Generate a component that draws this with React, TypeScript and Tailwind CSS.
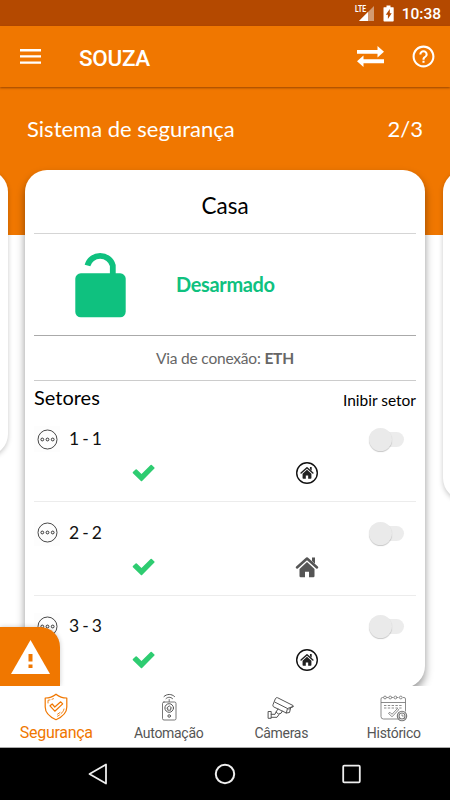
import { useState } from 'react'
import clsx from 'clsx'

interface Sector {
    id: number
    name: string
    circled: boolean
}

const sectors: Sector[] = [
    { id: 1, name: '1 - 1', circled: true },
    { id: 2, name: '2 - 2', circled: false },
    { id: 3, name: '3 - 3', circled: true },
]

function StatusBar() {
    return (
        <div className="flex h-[26px] shrink-0 items-center justify-end bg-[#b44900] pr-[9px] text-white">
            <svg className="h-[26px] w-[24px]" viewBox="0 0 24 26">
                <path d="M23 6v15H8z" fill="#d29a72" />
                <path d="M17 12v9H8z" fill="#fff" />
                <rect x="3" y="4" width="13" height="8.500" fill="#b44900" />
                <text x="4" y="12" fontSize="9.5" fontWeight="700" fontFamily="Roboto, sans-serif" fill="#fff" textLength="11" lengthAdjust="spacingAndGlyphs">LTE</text>
            </svg>
            <svg className="ml-[8px] h-[17px] w-[11px]" viewBox="0 0 11 17">
                <path d="M3.5 0.5h4v1.7h2.7q.5 0 .5.5v13q0 .8-.8.8H1.3q-.8 0-.8-.8v-13q0-.5.5-.5h2.5z" fill="#fff" />
                <path d="M6.8 4 2.8 9.7h2.1V14l3.8-5.7H6.8z" fill="#b44900" />
            </svg>
            <span className="ml-[7px] w-[40px] pt-[3px] text-right text-[15.5px] font-medium leading-none">10:38</span>
        </div>
    )
}

function Header() {
    return (
        <header className="relative z-10 flex h-[61px] shrink-0 items-center bg-[#f07700] pr-[14px] pl-5 text-white shadow-[0_1px_2px_rgba(80,30,0,0.55)]">
            <button title="Menu" className="h-[15px] w-[21px]">
                <svg className="h-[15px] w-[21px]" viewBox="0 0 21 15" fill="#fff">
                    <path d="M0 0h21v2.4H0zM0 6.2h21v2.4H0zM0 12.4h21v2.4H0z" />
                </svg>
            </button>
            <h1 className="ml-[38px] flex-1 pt-[3px] text-[22.5px] font-medium leading-none tracking-[-0.3px]">SOUZA</h1>
            <svg className="h-[21px] w-[27px]" viewBox="0 0 27 21" fill="#fff">
                <path d="M0 4h20.500V0l6.500 5.800-6.500 5.600V7.800H0zM27 17.200H6.500V21L0 15.200 6.500 9.600v3.700H27z" />
            </svg>
            <svg className="ml-[27px] h-[25px] w-[25px]" viewBox="0 0 24 24" fill="#fff">
                <path d="M11 18h2v-2h-2v2zm1-16.500C6.200 1.500 1.500 6.200 1.500 12S6.200 22.500 12 22.500 22.500 17.800 22.500 12 17.800 1.500 12 1.500zm0 19c-4.700 0-8.500-3.800-8.500-8.500S7.300 3.500 12 3.500s8.500 3.800 8.500 8.500-3.800 8.500-8.500 8.500zM12 6c-2.200 0-4 1.800-4 4h2c0-1.100.9-2 2-2s2 .9 2 2c0 2-3 1.750-3 5h2c0-2.250 3-2.500 3-5 0-2.200-1.800-4-4-4z" />
            </svg>
        </header>
    )
}

function OpenLock() {
    return (
        <svg className="h-[67px] w-[51px]" viewBox="0 0 51 67">
            <path d="M12.500 14.500a13 12.500 0 0 1 25.300 0v9" fill="none" stroke="#0fc17f" strokeWidth="5.800" />
            <rect x="0.300" y="22.300" width="50.400" height="44" rx="5.500" fill="#0fc17f" />
        </svg>
    )
}

function HousePaths() {
    return (
        <>
            <path d="M1 11.500 11 2.500l10 9" fill="none" stroke="currentColor" strokeWidth="2.500" strokeLinecap="round" strokeLinejoin="round" />
            <path d="M16 1.500h3v6.200l-3-2.700z" fill="currentColor" />
            <path d="M3.500 13 11 6l7.500 7v7q0 1.200-1.200 1.200h-4.300v-5.500H9v5.500H4.700q-1.200 0-1.200-1.200z" fill="currentColor" />
        </>
    )
}

function HouseIcon({ circled }: { circled: boolean }) {
    return (
        <svg className={clsx('h-[22px] w-[22px] overflow-visible', circled ? 'text-[#222]' : 'text-[#555]')} viewBox="0 0 22 22">
            {circled ? (
                <>
                    <circle cx="11" cy="11" r="10.300" fill="none" stroke="#111" strokeWidth="1.400" />
                    <g transform="translate(4.500 4.200) scale(.59)">
                        <HousePaths />
                    </g>
                </>
            ) : (
                <HousePaths />
            )}
        </svg>
    )
}

function SectorRow({ sector }: { sector: Sector }) {
    const [inhibited, setInhibited] = useState(false)

    return (
        <li className="h-[93.5px] border-b border-[#ececec] pt-[17.500px]">
            <div className="flex h-[26px] items-center">
                <span className="flex h-[26px] w-[26px] items-center justify-center bg-[#fdfdfd]">
                    <svg className="h-[21px] w-[21px]" viewBox="0 0 21 21" fill="none" stroke="#333">
                        <circle cx="10.500" cy="10.500" r="9.500" strokeWidth=".9" />
                        <circle cx="5.300" cy="10.500" r="1.400" />
                        <circle cx="10.500" cy="10.500" r="1.400" />
                        <circle cx="15.700" cy="10.500" r="1.400" />
                    </svg>
                </span>
                <span className="ml-[9px] flex-1 font-[Lato] text-[17.500px] leading-none tracking-[-0.3px] text-[#111] [word-spacing:-0.8px]">{sector.name}</span>
                <button
                    role="switch"
                    aria-checked={inhibited}
                    onClick={() => setInhibited(!inhibited)}
                    className="mt-px mr-[12px] flex h-[15px] w-[33px] items-center rounded-full bg-[#ececec]"
                >
                    <span className={clsx('h-[23px] w-[23px] shrink-0 rounded-full bg-[#eaeaea] shadow-[0_1px_1px_rgba(0,0,0,0.22)]', inhibited ? 'ml-[12px]' : '-ml-[2px]')} />
                </button>
            </div>
            <div className="mt-[10px] flex h-[22px] items-center">
                <svg className="ml-[98px] h-[18px] w-[23px]" viewBox="0 0 23 18">
                    <path d="M.9 8 3.600 5.500q.6-.4 1.200.1l4.700 4.500L18.600 1q.6-.5 1.200 0l2.600 2.400q.5.600 0 1.200L10.100 16.900q-.6.500-1.200 0L.9 9.200q-.5-.6 0-1.200z" fill="#2ecc71" />
                </svg>
                <div className="ml-[141px]">
                    <HouseIcon circled={sector.circled} />
                </div>
            </div>
        </li>
    )
}

function SystemCard() {
    return (
        <div className="h-[518px] w-[400px] shrink-0 rounded-[22px] bg-white px-[9px] font-[Lato] shadow-[0_5px_9px_rgba(0,0,0,0.42)]">
            <h2 className="flex h-[64px] items-center justify-center border-b border-[#d5d5d5] pt-[9px] text-[22.5px] text-black">Casa</h2>
            <div className="flex h-[102px] items-center border-b border-[#aaa]">
                <div className="ml-[41px]">
                    <OpenLock />
                </div>
                <span className="ml-[50px] text-[20px] font-bold tracking-[-0.35px] text-[#0fc17f]">Desarmado</span>
            </div>
            <div className="flex h-[45px] items-center justify-center border-b border-[#ccc] pt-[2px] text-[15.500px] tracking-[-0.2px] text-[#666]">
                Via de conexão:&nbsp;<b>ETH</b>
            </div>
            <div className="flex h-[28px] items-center justify-between text-black">
                <span className="pt-[5px] text-[20px]">Setores</span>
                <span className="pt-[12px] text-[15.500px]">Inibir setor</span>
            </div>
            <ul>
                {sectors.map(sector => (
                    <SectorRow key={sector.id} sector={sector} />
                ))}
            </ul>
        </div>
    )
}

function ShieldIcon() {
    return (
        <svg className="h-[28px] w-[26px]" viewBox="0 0 26 28" fill="none" stroke="currentColor" strokeWidth="1.200" strokeLinecap="round" strokeLinejoin="round">
            <path d="M13 1.200C10 3.700 6 5 2.200 5v9c0 6 4.800 10 10.800 12.700C19 24 23.800 20 23.800 14V5C20 5 16 3.700 13 1.200z" />
            <path d="M7 12.800 9.200 11l2.600 3 5.900-5.200 2 2.100-7.900 7.300z" />
            <path d="M5 10V7.300l2-.4M9 6.300l1.500-.6M21 16c-.5 2-1.500 3.500-3 4.700M16.500 22l-2 1.200M17 19.500l-2.500 1.700" strokeWidth=".9" />
        </svg>
    )
}

function RemoteIcon() {
    return (
        <svg className="h-[28px] w-[18px]" viewBox="0 0 18 28" fill="none" stroke="currentColor" strokeLinecap="round">
            <path d="M4 3.500c3-2.800 7.500-2.800 10.500 0M6 5.600c2-1.800 4.500-1.800 6.500 0" />
            <path d="M9.200 6.500v2M4 9h10.500q1.500 0 1.500 1.500v15q0 1.500-1.500 1.500H4q-1.500 0-1.500-1.500v-15Q2.500 9 4 9z" strokeWidth=".8" />
            <circle cx="9.200" cy="15" r="4.300" />
            <path d="m6.800 15 2.400-2.200 2.400 2.200M7.700 15v2.200h3V15" strokeWidth=".9" />
            <circle cx="9.200" cy="23" r="1.300" />
        </svg>
    )
}

function CameraIcon() {
    return (
        <svg className="mt-[2px] h-[22px] w-[28px]" viewBox="0 0 28 22" fill="none" stroke="currentColor" strokeLinejoin="round" strokeLinecap="round">
            <path d="M8.500 1.500q.6-1.300 2-.8L26 8.500q.8.500.2 1.200l-2.500 1-1.200 4.800-3.200.5L6.500 9.800q-1-.7-.6-1.800z" />
            <path d="m8 5.200 12.500 6.300 5.500-2M20.500 11.500 19.300 16M22 12.500l1.700-1.800" />
            <path d="m11 12-2 3q2.200 3.300 5 1.300l1.300-2.200M9 15l-1 2.300H4.200M12 17.500l-2 2.800H4.200M1.500 14.500h2.700v6.800H1.500z" />
        </svg>
    )
}

function CalendarIcon() {
    return (
        <svg className="mt-[2px] h-[27px] w-[28px]" viewBox="0 0 28 27" fill="none" stroke="#777" strokeWidth=".85">
            <path d="M18 24H3.500Q1 24 1 21.500V4Q1 2.500 2.500 2.500h1M25.500 16.500V4q0-1.500-1.500-1.500h-1M1 7.500h24.500M6.500 2.500h2M11.500 2.500h2M16.500 2.500h2" />
            <circle cx="5" cy="2.500" r="1.400" />
            <circle cx="10.200" cy="2.500" r="1.400" />
            <circle cx="15.400" cy="2.500" r="1.400" />
            <circle cx="20.800" cy="2.500" r="1.400" />
            <path d="M4 10.500h19M4 13h19" strokeDasharray="2.400 1.400" />
            <path d="m8.500 18.300 1.500-1 2 2 5.500-5.800 1.200 1.300-6.700 7z" />
            <circle cx="22" cy="21" r="4.700" strokeWidth="1.100" />
            <circle cx="22" cy="21" r="3" strokeWidth="1.100" />
            <path d="M22 19.300V21h1.700" />
        </svg>
    )
}

const tabs = [
    { label: 'Segurança', icon: <ShieldIcon /> },
    { label: 'Automação', icon: <RemoteIcon /> },
    { label: 'Câmeras', icon: <CameraIcon /> },
    { label: 'Histórico', icon: <CalendarIcon /> },
]

function TabBar() {
    const [active, setActive] = useState('Segurança')

    return (
        <nav className="flex h-[62px] shrink-0 border-b border-[#aaa] bg-white">
            {tabs.map(tab => (
                <button
                    key={tab.label}
                    onClick={() => setActive(tab.label)}
                    className={clsx('flex flex-1 flex-col items-center leading-none', active === tab.label ? 'text-[16px] tracking-[-0.3px] text-[#f07700]' : 'text-[14px] tracking-[-0.3px] text-[#555]')}
                >
                    <span className="mt-[6px] flex h-[30px] items-center justify-center">{tab.icon}</span>
                    <span className="mt-px flex h-[20px] items-center">{tab.label}</span>
                </button>
            ))}
        </nav>
    )
}

export default function App() {
    return (
        <div className="flex h-[800px] w-[450px] flex-col overflow-hidden bg-white font-[Roboto]">
            <StatusBar />
            <Header />

            <main className="relative h-[599px] shrink-0 overflow-hidden">
                <div className="flex h-[148px] items-start justify-between bg-[#f07700] pt-[28px] pr-[27px] pl-[27px] font-[Lato] text-[22px] leading-[28px] text-white">
                    <span>Sistema de segurança</span>
                    <span>2/3</span>
                </div>

                {/* Cards, the neighbours peek in at both sides */}
                <div className="-mt-[65.500px] flex items-start justify-center gap-[17.500px]">
                    <div className="h-[286px] w-[400px] shrink-0 rounded-[22px] bg-white shadow-[0_2px_5px_rgba(0,0,0,0.22)]" />
                    <SystemCard />
                    <div className="h-[330px] w-[400px] shrink-0 rounded-[22px] bg-white shadow-[0_2px_5px_rgba(0,0,0,0.22)]" />
                </div>

                {/* Alert button */}
                <button title="Alerta" className="absolute bottom-0 left-0 flex h-[59px] w-[60px] items-center justify-center rounded-tr-[20px] bg-[#f07700] shadow-[0_0_5px_rgba(0,0,0,0.2)]">
                    <svg className="h-[34px] w-[39px]" viewBox="0 0 39 34">
                        <path d="M19.500 0 39 34H0z" fill="#fff" />
                        <path d="M17.500 14h4v7.500h-4zM17.500 24.500h4v3.500h-4z" fill="#f07700" />
                    </svg>
                </button>
            </main>

            <TabBar />

            {/* System navigation */}
            <div className="flex h-[52px] shrink-0 items-center justify-center gap-[105px] bg-black">
                <svg className="h-[22px] w-[22px]" viewBox="0 0 22 22" fill="none" stroke="#eee" strokeWidth="1.800" strokeLinejoin="round">
                    <path d="M19 1.500v19L2.500 11z" />
                </svg>
                <svg className="h-[22px] w-[22px]" viewBox="0 0 22 22" fill="none" stroke="#eee" strokeWidth="2">
                    <circle cx="11" cy="11" r="9.200" />
                </svg>
                <svg className="h-[22px] w-[22px]" viewBox="0 0 22 22" fill="none" stroke="#eee" strokeWidth="1.800">
                    <rect x="2.200" y="2.700" width="16.600" height="16.600" rx="1" />
                </svg>
            </div>
        </div>
    )
}
